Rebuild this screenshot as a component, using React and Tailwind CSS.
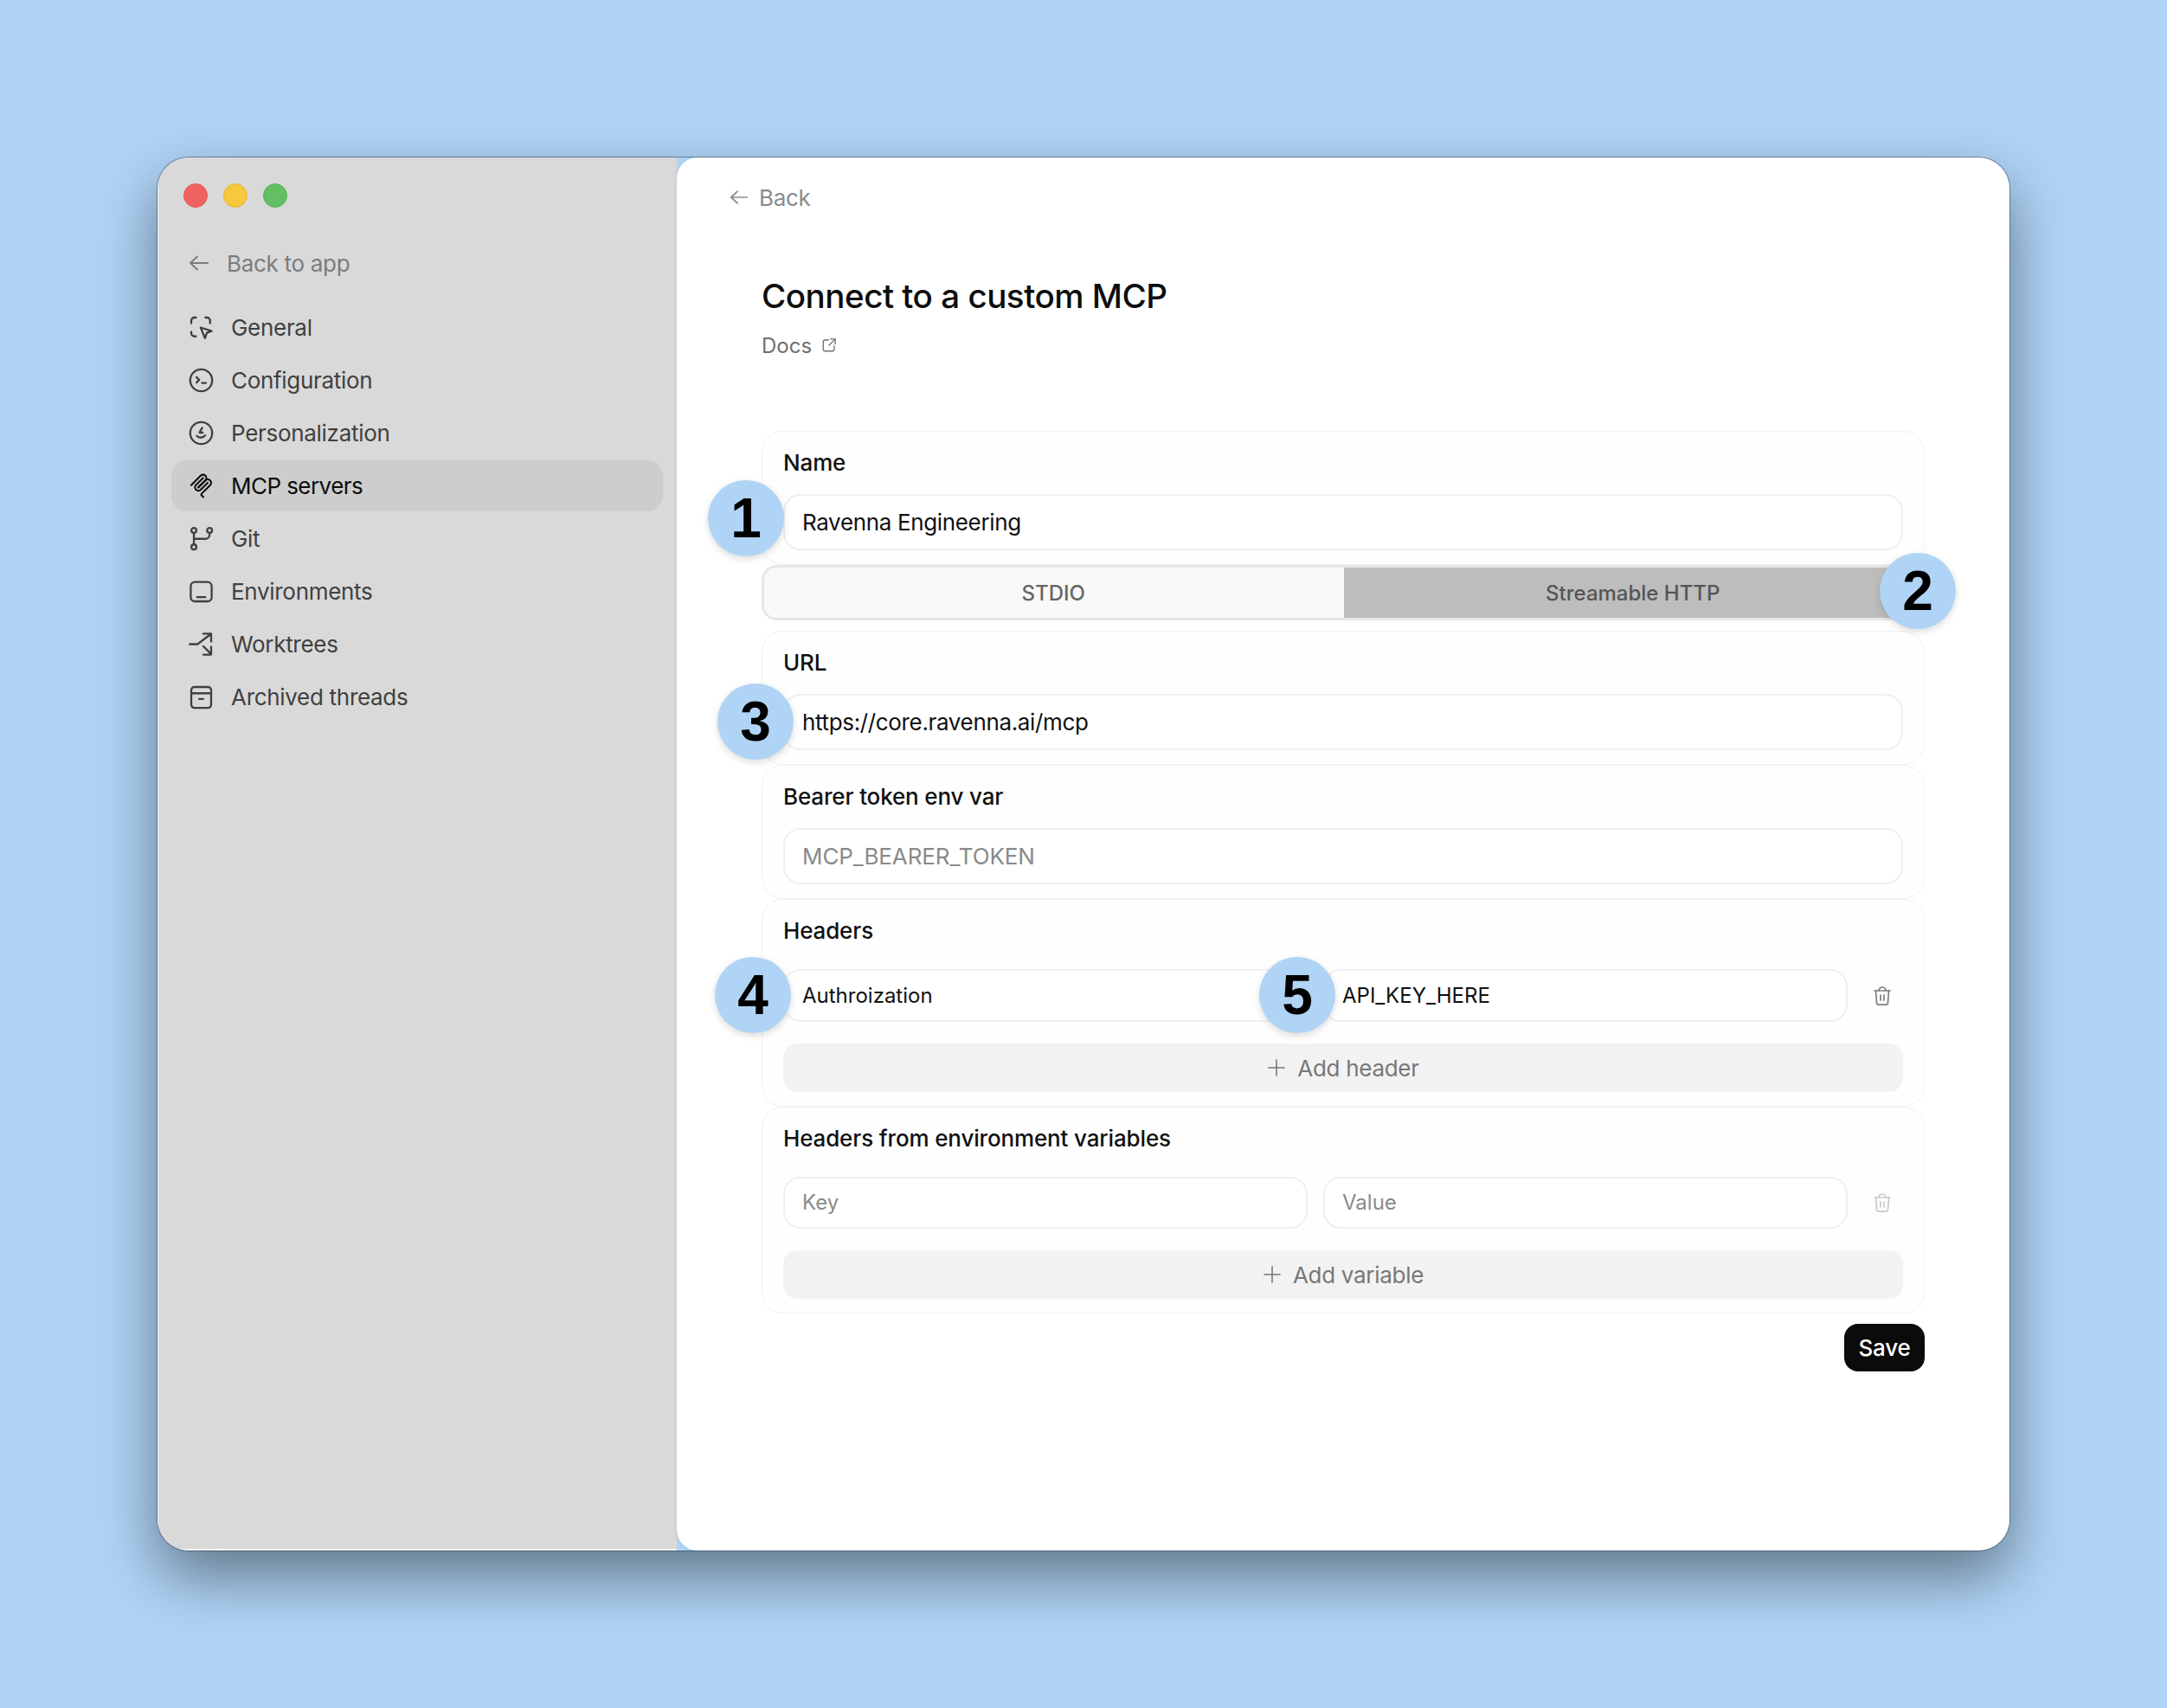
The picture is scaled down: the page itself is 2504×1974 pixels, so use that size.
import React from 'react';

const Icon = ({ size = 29, stroke = 1.9, className = '', view = '0 0 24 24', children }) => (
  <svg
    width={size}
    height={size}
    viewBox={view}
    fill="none"
    stroke="currentColor"
    strokeWidth={stroke}
    strokeLinecap="round"
    strokeLinejoin="round"
    className={className}
  >
    {children}
  </svg>
);

const ArrowLeft = ({ size }) => (
  <Icon size={size} stroke={1.9}>
    <path d="M2 12h20M10 4.5 2 12l8 7.5" />
  </Icon>
);

const navItems = [
  {
    label: 'General',
    icon: (
      <Icon>
        <path d="M2.500 8V5.500a3 3 0 0 1 3-3H7" />
        <path d="M16 2.500h1.500a3 3 0 0 1 3 3V8" />
        <path d="M2.500 16v1.500a3 3 0 0 0 3 3H7" />
        <path d="M11.500 12 22 15.400l-4.600 1.600-1.800 5.200z" />
      </Icon>
    ),
  },
  {
    label: 'Configuration',
    icon: (
      <Icon>
        <circle cx="12" cy="12" r="10.500" />
        <path d="m7.500 9 2.600 2.600-2.600 2.600" />
        <path d="M12.800 14.600h3.700" />
      </Icon>
    ),
  },
  {
    label: 'Personalization',
    icon: (
      <Icon>
        <circle cx="12" cy="12" r="10.500" />
        <path d="M13 7c-1 1.400-2 3-2.600 4.600h3" />
        <path d="M7.800 14.600c1.600 2.400 5.600 2.400 8-.4" />
      </Icon>
    ),
  },
  {
    label: 'MCP servers',
    active: true,
    icon: (
      <Icon view="0 0 180 180" stroke={13}>
        <path d="M18 84.850 85.880 16.970c9.370-9.370 24.570-9.370 33.940 0s9.370 24.570 0 33.940L68.560 102.180" />
        <path d="m69.270 101.470 50.550-50.560c9.370-9.370 24.570-9.370 33.940 0l.36.36c9.370 9.370 9.370 24.570 0 33.940L92.720 146.600c-3.120 3.120-3.120 8.190 0 11.310l12.610 12.610" />
        <path d="M102.850 33.940 52.650 84.150c-9.370 9.370-9.370 24.570 0 33.940s24.570 9.370 33.940 0l50.200-50.210" />
      </Icon>
    ),
  },
  {
    label: 'Git',
    icon: (
      <Icon>
        <circle cx="5" cy="4.200" r="2.400" />
        <circle cx="20" cy="4.200" r="2.400" />
        <circle cx="5" cy="20" r="2.400" />
        <path d="M5 6.600v11" />
        <path d="M20 6.600v1.600a4 4 0 0 1-4 4H5" />
      </Icon>
    ),
  },
  {
    label: 'Environments',
    icon: (
      <Icon>
        <rect x="2" y="3" width="20" height="18.500" rx="4" />
        <path d="M8 17.500h8" />
      </Icon>
    ),
  },
  {
    label: 'Worktrees',
    icon: (
      <Icon>
        <path d="M1 12h7.500L21 2.500" />
        <path d="M14 2h7.500v7.500" />
        <path d="m14 14 7 7" />
        <path d="M21.500 14.500v7.500H14" />
      </Icon>
    ),
  },
  {
    label: 'Archived threads',
    icon: (
      <Icon>
        <rect x="2.500" y="2.500" width="19" height="20" rx="3" />
        <path d="M2.500 8.500h19" />
        <path d="M10 14h4" />
      </Icon>
    ),
  },
];

const Bubble = ({ n, className }) => (
  <div
    className={`absolute z-10 flex h-[88px] w-[88px] items-center justify-center rounded-full bg-[#b0d4f5] text-[64px] leading-none font-bold text-black shadow-[0_3px_8px_rgba(0,0,0,0.14)] font-['Liberation_Sans',sans-serif] ${className}`}
  >
    {n}
  </div>
);

const Field = ({ value, placeholder, className = 'h-[65px] text-[26px] tracking-[-0.35px]' }) => (
  <div
    className={`flex min-w-0 flex-1 items-center rounded-[20px] border-2 border-[#efefef] bg-white px-[20px] ${className} ${
      placeholder ? 'text-[#8a8a8a]' : 'text-[#111111]'
    }`}
  >
    {value || placeholder}
  </div>
);

const Section = ({ label, children }) => (
  <section className="rounded-[24px] border border-[#f1f1f1] bg-[#fefefe] px-6 pt-5 pb-4">
    <div className="h-8 text-[26px] leading-8 font-medium tracking-[-0.15px] text-[#111111]">{label}</div>
    {children}
  </section>
);

const Trash = ({ faded }) => (
  <div className={`w-[64px] shrink-0 pl-[28px] ${faded ? 'text-[#c9c9c9]' : 'text-[#7d7d7d]'}`}>
    <Icon size={24} stroke={1.7}>
      <path d="M3 6h18" />
      <path d="M8 6a4 4 0 0 1 8 0" />
      <path d="m4.500 6 1 14a2.400 2.400 0 0 0 2.400 2.200h8.200a2.400 2.400 0 0 0 2.400-2.200l1-14" />
      <path d="M10 11v6M14 11v6" />
    </Icon>
  </div>
);

const AddButton = ({ label }) => (
  <div className="mt-[25px] flex h-[56px] items-center justify-center gap-[13px] rounded-[16px] bg-[#f2f2f2] text-[26px] tracking-[-0.3px] text-[#777777]">
    <Icon size={22} stroke={1.7}>
      <path d="M12 2v20M2 12h20" />
    </Icon>
    <span>{label}</span>
  </div>
);

export default function App() {
  return (
    <div className="h-[1974px] w-[2504px] overflow-hidden bg-[#b0d4f6] pt-[182px] pl-[182px] font-['Inter',sans-serif]">
      <div className="flex h-[1610px] w-[2140px] overflow-hidden rounded-[36px] shadow-[0_0_0_1px_rgba(50,70,95,0.55),0_30px_70px_rgba(0,0,0,0.45)]">
        <aside className="w-[600px] shrink-0 bg-[#d9d9d9] shadow-[inset_1px_-2px_0_rgba(255,255,255,0.75)]">
          <div className="flex gap-[18px] pt-[30px] pl-[30px]">
            <span className="h-[28px] w-[28px] rounded-full border border-[#e5524f] bg-[#f0625f]" />
            <span className="h-[28px] w-[28px] rounded-full border border-[#e8b934] bg-[#f5c83d]" />
            <span className="h-[28px] w-[28px] rounded-full border border-[#55b055] bg-[#62c062]" />
          </div>
          <div className="mt-[44px] flex h-[40px] items-center gap-[20px] pl-[36px] text-[26px] tracking-[-0.3px] text-[#7c7c7c]">
            <ArrowLeft size={24} />
            <span>Back to app</span>
          </div>
          <nav className="mt-[25px] flex flex-col gap-[2px] px-4">
            {navItems.map((item) => (
              <div
                key={item.label}
                className={`flex h-[59px] items-center gap-[20px] rounded-[18px] pl-[20px] text-[26px] ${
                  item.active ? 'bg-[#cdcdcd] tracking-[-0.55px] text-[#0d0d0d]' : 'tracking-[-0.3px] text-[#404040]'
                }`}
              >
                {item.icon}
                <span>{item.label}</span>
              </div>
            ))}
          </nav>
        </aside>

        <main className="flex min-w-0 flex-1 flex-col rounded-l-[24px] bg-white pt-[26px] pl-[61px] shadow-[0_0_4px_rgba(0,0,0,0.1)]">
          <div className="flex h-[40px] items-center gap-[12px] text-[26px] tracking-[-0.3px] text-[#8a8a8a]">
            <ArrowLeft size={22} />
            <span>Back</span>
          </div>
          <div className="ml-[37px] w-[1344px]">
            <h1 className="mt-[70px] h-[48px] text-[38.600px] leading-[48px] font-medium tracking-[-0.5px] text-[#0d0d0d]">
              Connect to a custom MCP
            </h1>
            <div className="mt-[18px] flex h-[32px] items-center gap-[11px] text-[24px] text-[#707070]">
              <span>Docs</span>
              <Icon size={18} stroke={1.8} className="mb-[3px]">
                <path d="M11 4H6a3 3 0 0 0-3 3v11a3 3 0 0 0 3 3h11a3 3 0 0 0 3-3v-5" />
                <path d="M14 2.500h7.500V10" />
                <path d="m21.500 2.500-9.500 9.500" />
              </Icon>
            </div>

            <div className="relative mt-[82px]">
              <Section label="Name">
                <div className="mt-5 flex">
                  <Field value="Ravenna Engineering" />
                </div>
              </Section>
              <Bubble n="1" className="top-[57px] left-[-62px]" />

              <div className="flex h-[64px] overflow-hidden rounded-[18px] border-[3px] border-[#e6e6e6] text-[24px] font-medium text-[#666666]">
                <div className="flex flex-1 items-center justify-center bg-[#f9f9f9] pt-[2px] pr-[1px]">STDIO</div>
                <div className="flex flex-1 items-center justify-center bg-[#bdbdbd] pt-[2px] text-[#555555]">Streamable HTTP</div>
              </div>
              <Bubble n="2" className="top-[141px] right-[-36px]" />

              <div className="mt-3">
                <Section label="URL">
                  <div className="mt-5 flex">
                    <Field value="https://core.ravenna.ai/mcp" />
                  </div>
                </Section>
              </div>
              <Bubble n="3" className="top-[292px] left-[-51px]" />

              <Section label="Bearer token env var">
                <div className="mt-5 flex">
                  <Field placeholder="MCP_BEARER_TOKEN" className="h-[65px] text-[26px] tracking-[-0.1px]" />
                </div>
              </Section>

              <Section label="Headers">
                <div className="mt-7 flex items-center gap-[18px]">
                  <Field value="Authroization" className="h-[61px] text-[24px]" />
                  <Field value="API_KEY_HERE" className="h-[61px] text-[24px]" />
                  <div className="-ml-[18px]">
                    <Trash />
                  </div>
                </div>
                <AddButton label="Add header" />
              </Section>
              <Bubble n="4" className="top-[608px] left-[-54px]" />
              <Bubble n="5" className="top-[608px] left-[575px]" />

              <Section label="Headers from environment variables">
                <div className="mt-7 flex items-center gap-[18px]">
                  <Field placeholder="Key" className="h-[60px] text-[24px]" />
                  <Field placeholder="Value" className="h-[60px] text-[24px]" />
                  <div className="-ml-[18px]">
                    <Trash faded />
                  </div>
                </div>
                <AddButton label="Add variable" />
              </Section>

              <div className="mt-3 flex justify-end">
                <div className="flex h-[55px] w-[93px] items-center justify-center rounded-[16px] bg-[#0b0b0b] text-[26px] font-medium tracking-[-0.2px] text-white">
                  Save
                </div>
              </div>
            </div>
          </div>
        </main>
      </div>
    </div>
  );
}
